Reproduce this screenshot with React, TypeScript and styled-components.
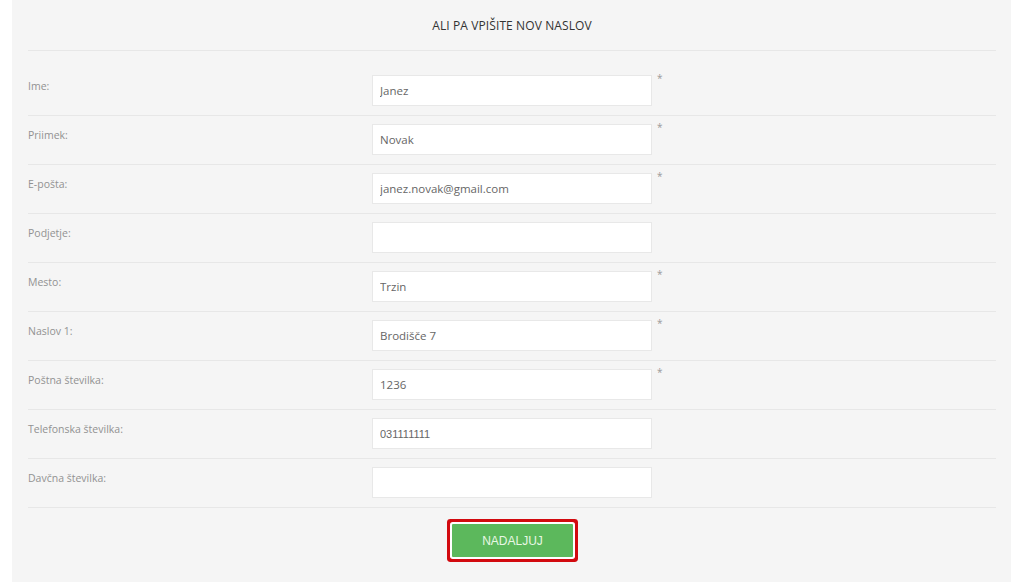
import React from "react";
import styled, { createGlobalStyle } from "styled-components";

const Global = createGlobalStyle`
  html, body { margin: 0; padding: 0; background: #ffffff; }
  body { font-family: "Open Sans", "Liberation Sans", sans-serif; }
  * { box-sizing: border-box; }
`;

const Page = styled.div`
  padding-left: 12px;
  padding-right: 5px;
  height: 582px;
  overflow: hidden;
`;

const Panel = styled.section`
  background: #f5f5f5;
  padding: 0 15px 0 16px;
  height: 582px;
`;

const Heading = styled.h3`
  margin: 0;
  height: 51px;
  display: flex;
  align-items: center;
  justify-content: center;
  padding-top: 1px;
  border-bottom: 1px solid #e7e7e7;
  font-size: 12px;
  font-weight: 400;
  color: #333;
  letter-spacing: 0.1px;
  text-transform: uppercase;
`;

const Form = styled.form`
  padding-top: 16px;
`;

const Row = styled.div`
  display: grid;
  grid-template-columns: 344px 280px auto;
  align-items: start;
  padding: 8px 0 9px;
  border-bottom: 1px solid #e7e7e7;
`;

const Label = styled.label`
  font-size: 10.5px;
  line-height: 16px;
  color: #929292;
  padding-top: 3px;
`;

const Input = styled.input<{ $narrow?: boolean }>`
  width: 280px;
  height: 31px;
  border: 1px solid #e8e8e8;
  background: #fff;
  padding: 0 7px;
  font-family: ${(p) => (p.$narrow ? '"Liberation Sans Narrow", "Liberation Sans", sans-serif' : '"Open Sans", sans-serif')};
  font-size: ${(p) => (p.$narrow ? "11px" : "11.5px")};
  color: #666;
  outline: none;
`;

const Star = styled.span`
  margin-left: 5px;
  margin-top: -3px;
  font-size: 10px;
  color: #9a9a9a;
  line-height: 12px;
`;

const Actions = styled.div`
  display: flex;
  justify-content: center;
  padding-top: 16px;
`;

const Button = styled.button`
  width: 121px;
  height: 33px;
  margin-left: 1px;
  border: none;
  background: #5cb85c;
  color: #e8f7e4;
  font-family: "Liberation Sans", Arial, sans-serif;
  font-size: 12px;
  box-shadow: 0 0 0 2px #ffffff, 0 0 0 5px #d20a0f;
  border-radius: 1px;
`;

type Field = { label: string; value: string; req: boolean; narrow?: boolean };

const fields: Field[] = [
  { label: "Ime:", value: "Janez", req: true },
  { label: "Priimek:", value: "Novak", req: true },
  { label: "E-pošta:", value: "janez.novak@gmail.com", req: true },
  { label: "Podjetje:", value: "", req: false },
  { label: "Mesto:", value: "Trzin", req: true },
  { label: "Naslov 1:", value: "Brodišče 7", req: true },
  { label: "Poštna številka:", value: "1236", req: true },
  { label: "Telefonska številka:", value: "031111111", req: false, narrow: true },
  { label: "Davčna številka:", value: "", req: false },
];

export default function App() {
  return (
    <>
      <Global />
      <Page>
        <Panel>
          <Heading>Ali pa vpišite nov naslov</Heading>
          <Form onSubmit={(e) => e.preventDefault()}>
            {fields.map((f) => (
              <Row key={f.label}>
                <Label>{f.label}</Label>
                <Input defaultValue={f.value} $narrow={f.narrow} />
                {f.req ? <Star>*</Star> : <span />}
              </Row>
            ))}
            <Actions>
              <Button type="submit">NADALJUJ</Button>
            </Actions>
          </Form>
        </Panel>
      </Page>
    </>
  );
}
